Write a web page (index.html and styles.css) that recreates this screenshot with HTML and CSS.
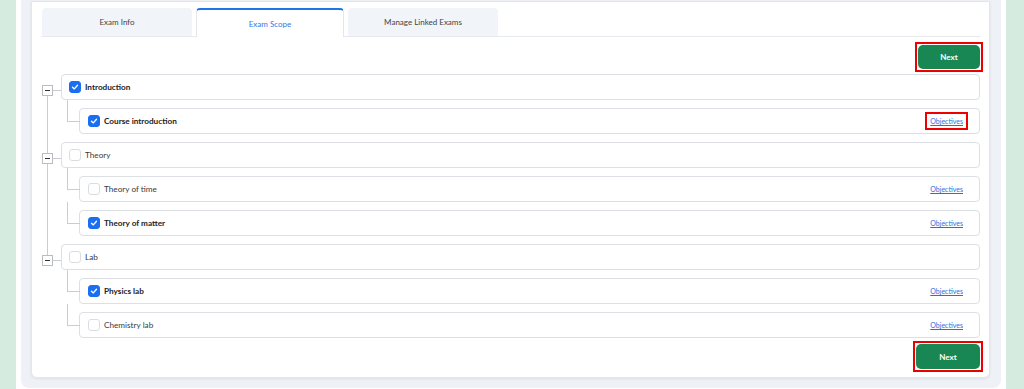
FILE: index.html
```html
<!DOCTYPE html>
<html lang="en">
<head>
  <meta charset="UTF-8">
  <meta name="viewport" content="width=device-width, initial-scale=1.0">
  <title>Exam Scope</title>
  <link rel="stylesheet" href="styles.css">
</head>
<body>
  <div class="shell">
    <div class="panel">
      <div class="card">
        <div class="tabs">
          <a href="javascript:;" class="tab">Exam Info</a>
          <a href="javascript:;" class="tab active">Exam Scope</a>
          <a href="javascript:;" class="tab">Manage Linked Exams</a>
        </div>

        <div class="actions top">
          <span class="mark"><button class="btn-next">Next</button></span>
        </div>

        <div class="tree">
          <div class="node">
            <span class="toggle"></span>
            <div class="row">
              <span class="check on"><svg viewBox="0 0 12 12"><polyline points="3,6.2 5.2,8.3 9,3.9"/></svg></span>
              <span class="label strong">Introduction</span>
            </div>
            <div class="children">
              <div class="child">
                <div class="row">
                  <span class="check on"><svg viewBox="0 0 12 12"><polyline points="3,6.2 5.2,8.3 9,3.9"/></svg></span>
                  <span class="label strong">Course introduction</span>
                  <a href="javascript:;" class="objectives marked">Objectives</a>
                </div>
              </div>
            </div>
          </div>

          <div class="node">
            <span class="toggle"></span>
            <div class="row">
              <span class="check"></span>
              <span class="label">Theory</span>
            </div>
            <div class="children">
              <div class="child">
                <div class="row">
                  <span class="check"></span>
                  <span class="label">Theory of time</span>
                  <a href="javascript:;" class="objectives">Objectives</a>
                </div>
              </div>
              <div class="child">
                <div class="row">
                  <span class="check on"><svg viewBox="0 0 12 12"><polyline points="3,6.2 5.2,8.3 9,3.9"/></svg></span>
                  <span class="label strong">Theory of matter</span>
                  <a href="javascript:;" class="objectives">Objectives</a>
                </div>
              </div>
            </div>
          </div>

          <div class="node">
            <span class="toggle"></span>
            <div class="row">
              <span class="check"></span>
              <span class="label">Lab</span>
            </div>
            <div class="children">
              <div class="child">
                <div class="row">
                  <span class="check on"><svg viewBox="0 0 12 12"><polyline points="3,6.2 5.2,8.3 9,3.9"/></svg></span>
                  <span class="label strong">Physics lab</span>
                  <a href="javascript:;" class="objectives">Objectives</a>
                </div>
              </div>
              <div class="child">
                <div class="row">
                  <span class="check"></span>
                  <span class="label">Chemistry lab</span>
                  <a href="javascript:;" class="objectives">Objectives</a>
                </div>
              </div>
            </div>
          </div>
        </div>

        <div class="actions bottom">
          <span class="mark"><button class="btn-next big">Next</button></span>
        </div>
      </div>
    </div>
  </div>
</body>
</html>
```

FILE: styles.css
```css
body {
  margin: 0;
  background: #d5ebdf;
  font-family: Lato, "Open Sans", sans-serif;
  color: #333;
}
a {
  text-decoration: none;
}
.shell {
  margin: 0 18px 0 16px;
  background: #fff;
  padding: 0 5px 2px;
}
.panel {
  background: #eef2f6;
  border-radius: 0 0 8px 8px;
  padding: 1px 11px 10px 10px;
}
.card {
  background: #fff;
  border: 1px solid #e3e7eb;
  border-radius: 0 0 6px 6px;
  box-shadow: 0 1px 3px rgba(0, 0, 0, 0.08);
  padding: 6px 9px 8px 10px;
}

/* tabs */
.tabs {
  display: flex;
  gap: 4px;
  height: 28px;
  border-bottom: 1px solid #e6e9ed;
}
.tab {
  width: 150px;
  height: 28px;
  box-sizing: border-box;
  display: flex;
  align-items: center;
  justify-content: center;
  background: #f1f4f8;
  border-radius: 4px 4px 0 0;
  color: #444;
  font-size: 8px;
}
.tab:nth-child(2) {
  width: 148px;
}
.tab.active {
  background: #fff;
  color: #2f7ae5;
  border: 1px solid #e3e7eb;
  border-top: 2px solid #1f74e8;
  border-bottom: 0;
  height: 29px;
  margin-bottom: -1px;
}

/* next buttons */
.actions {
  display: flex;
  justify-content: flex-end;
}
.actions.top {
  margin: 8px 0 5px;
}
.actions.bottom {
  margin-top: 6px;
}
.mark {
  display: flex;
  outline: 2px solid #ee0000;
  outline-offset: 1px;
}
.btn-next {
  width: 62px;
  height: 24px;
  border: 0;
  border-radius: 5px;
  background: #198754;
  color: #fff;
  font: bold 8px Lato, sans-serif;
}
.btn-next.big {
  width: 64px;
  height: 25px;
}

/* tree */
.tree {
  display: flex;
  flex-direction: column;
  gap: 8px;
}
.node {
  position: relative;
  padding-left: 19px;
}
.node:not(:last-child)::after {
  content: "";
  position: absolute;
  left: 5px;
  top: 22px;
  bottom: -19px;
  border-left: 1px solid #c9cdd1;
}
.toggle {
  position: absolute;
  left: 0;
  top: 11px;
  width: 11px;
  height: 11px;
  box-sizing: border-box;
  border: 1px solid #b9bdc2;
  background: #fff;
}
.toggle::before {
  content: "";
  position: absolute;
  left: 2px;
  top: 4px;
  width: 5px;
  border-top: 1px solid #333;
}
.toggle::after {
  content: "";
  position: absolute;
  left: 10px;
  top: 4px;
  width: 8px;
  border-top: 1px solid #c9cdd1;
}
.row {
  height: 26px;
  box-sizing: border-box;
  display: flex;
  align-items: center;
  gap: 4px;
  padding: 0 16px 0 7px;
  border: 1px solid #dcdfe3;
  border-radius: 4px;
  background: #fff;
  font-size: 8.2px;
}
.children {
  display: flex;
  flex-direction: column;
  gap: 8px;
  margin-top: 8px;
  padding-left: 18px;
}
.child {
  position: relative;
}
.child .row {
  padding-left: 8px;
}
.child::before {
  content: "";
  position: absolute;
  left: -12px;
  top: -8px;
  width: 12px;
  height: 21px;
  border-left: 1px solid #c9cdd1;
  border-bottom: 1px solid #c9cdd1;
}
.check {
  width: 12px;
  height: 12px;
  box-sizing: border-box;
  border: 1px solid #d9dde2;
  border-radius: 3px;
  background: #fff;
  flex: none;
}
.check.on {
  border-color: #1a6ff0;
  background: #1a6ff0;
}
.check svg {
  display: block;
  width: 10px;
  height: 10px;
  fill: none;
  stroke: #fff;
  stroke-width: 1.6;
  stroke-linecap: round;
  stroke-linejoin: round;
}
.label {
  flex: 1;
  color: #3a3a3a;
}
.label.strong {
  font-weight: bold;
  color: #222;
}
.objectives {
  color: #2a6fe0;
  text-decoration: underline;
  font-size: 7px;
}
.objectives.marked {
  outline: 2px solid #ee0000;
  outline-offset: 3px;
}
```
